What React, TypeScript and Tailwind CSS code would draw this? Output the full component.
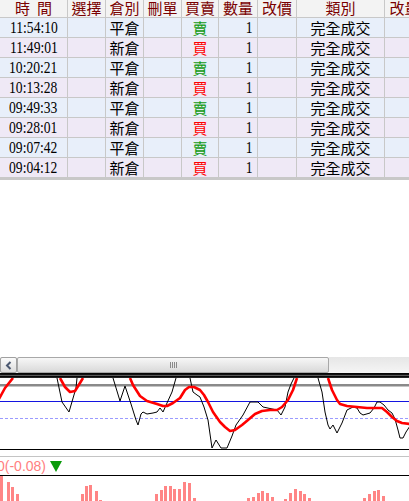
import React from "react";

const cols = "grid grid-cols-[68px_38px_38px_38px_37px_39px_39px_88px_40px]";
const cjk = "font-['Noto_Sans_CJK_TC','Noto_Sans_CJK_JP',sans-serif]";
const serif = "font-['Liberation_Serif','Noto_Sans_CJK_TC',serif]";

const heads = ["時間", "選擇", "倉別", "刪單", "買賣", "數量", "改價", "類別", "改量"];

const rows = [
  ["11:54:10", "平倉", "賣"],
  ["11:49:01", "新倉", "買"],
  ["10:20:21", "平倉", "賣"],
  ["10:13:28", "新倉", "買"],
  ["09:49:33", "平倉", "賣"],
  ["09:28:01", "新倉", "買"],
  ["09:07:42", "平倉", "賣"],
  ["09:04:12", "新倉", "買"],
];

// chart lines, y is relative to top of plot (page y 378)
const black = [
  [[57, 0], [62, 24], [69, 34], [76, 10], [77, 0]],
  [[113, 0], [120, 23], [125, 8], [131, 26], [136, 42], [138, 47], [141, 36], [143, 34], [147, 36], [153, 35], [157, 34], [160, 30], [163, 34], [167, 25], [172, 14], [176, 0]],
  [[190, 0], [193, 14], [197, 17], [200, 19], [204, 29], [208, 42], [212, 70], [216, 62], [221, 70], [227, 70], [232, 58], [236, 47], [243, 37], [250, 24], [258, 24], [263, 29], [277, 32], [281, 37], [285, 29], [288, 14], [291, 6], [294, 0]],
  [[318, 0], [322, 14], [325, 34], [328, 47], [330, 51], [333, 47], [337, 55], [342, 45], [347, 32], [353, 29], [357, 30], [360, 35], [363, 37], [370, 35], [374, 30], [377, 24], [380, 24], [384, 27], [388, 32], [392, 35], [395, 41], [398, 52], [400, 60], [403, 60], [406, 54], [410, 48]],
];

const red = [
  [[-1, 21], [5, 10], [13, 0]],
  [[60, 0], [65, 9], [70, 14], [75, 13], [80, 5], [83, 0]],
  [[130, 0], [133, 7], [140, 18], [147, 23], [157, 26], [163, 28], [167, 28], [173, 25], [180, 20], [185, 12], [189, 9], [194, 9], [200, 12], [204, 17], [208, 24], [213, 34], [220, 44], [225, 49], [230, 53], [235, 52], [242, 47], [248, 42], [255, 36], [262, 33], [270, 32], [277, 32], [282, 29], [288, 22], [293, 12], [297, 0]],
  [[328, 0], [332, 12], [337, 22], [340, 26], [347, 28], [357, 29], [367, 30], [382, 30], [387, 34], [392, 39], [397, 43], [402, 45], [410, 46]],
];

const bars: [number, number][] = [
  [0, 476], [7, 482], [11, 487], [16, 494],
  [81, 494], [85, 486], [89, 485], [95, 491], [99, 500],
  [155, 494], [160, 490], [164, 486], [169, 486], [173, 489], [178, 489], [183, 482], [188, 483], [193, 498],
  [247, 498], [252, 497], [257, 493], [261, 491], [266, 493], [271, 497],
  [284, 499], [289, 493], [294, 489], [299, 491], [303, 494], [308, 498],
  [363, 498], [368, 494], [373, 491], [377, 490], [382, 496],
];

const pts = (p: number[][]) => p.map(([x, y]) => `${x},${y}`).join(" ");

function Chart() {
  return (
    <svg width="409" height="72" className="block">
      <rect x="0" y="6" width="409" height="2.5" fill="#8a8a8a" />
      <line x1="0" y1="23.5" x2="409" y2="23.5" stroke="#1414e0" strokeWidth="1" />
      <line x1="0" y1="40.5" x2="409" y2="40.5" stroke="#9a9aff" strokeWidth="1" strokeDasharray="3 2" />
      <line x1="0" y1="71.5" x2="409" y2="71.5" stroke="#000" strokeWidth="1" />
      {black.map((p, i) => (
        <polyline key={i} points={pts(p)} fill="none" stroke="#000" strokeWidth="1" />
      ))}
      {red.map((p, i) => (
        <polyline key={i} points={pts(p)} fill="none" stroke="#ff0000" strokeWidth="2.6" strokeLinejoin="round" />
      ))}
    </svg>
  );
}

export default function App() {
  return (
    <div className="w-[409px] h-[501px] overflow-hidden bg-white flex flex-col">
      <div className="overflow-hidden">
        <div className={`${cols} w-[426px] h-[18px] bg-[#f3f3f3] border-b border-[#c8c8c8]`}>
          {heads.map((h, i) => (
            <div key={h} className={`border-r border-[#c8c8c8] flex justify-center items-start ${cjk} text-[15px] leading-[16px] text-[#7a0000] ${i === 0 ? "tracking-[7px] pl-[7px]" : ""}`}>
              {h}
            </div>
          ))}
        </div>
        {rows.map(([t, k, s], i) => (
          <div key={t} className={`${cols} w-[426px] h-[20px] border-b border-[#c8c8c8] ${i % 2 === 0 ? "bg-[#e8effa]" : "bg-[#efe9f6]"}`}>
            <div className="border-r border-[#c8c8c8] flex items-center justify-center">
              <span className={`${serif} inline-block scale-x-[0.8] text-[17px] leading-none`}>{t}</span>
            </div>
            <div className="border-r border-[#c8c8c8]" />
            <div className={`border-r border-[#c8c8c8] flex items-center justify-center ${cjk} text-[15px] leading-none`}>{k}</div>
            <div className="border-r border-[#c8c8c8]" />
            <div className={`border-r border-[#c8c8c8] flex items-center justify-center ${cjk} text-[15px] leading-none ${s === "買" ? "text-[#ff0000]" : "text-[#109a10]"}`}>{s}</div>
            <div className="border-r border-[#c8c8c8] flex items-center justify-end pr-[4px]">
              <span className={`${serif} inline-block scale-x-[0.8] text-[17px] leading-none`}>1</span>
            </div>
            <div className="border-r border-[#c8c8c8]" />
            <div className={`border-r border-[#c8c8c8] flex items-center justify-center ${cjk} text-[15px] leading-none`}>完全成交</div>
            <div className="border-r border-[#c8c8c8]" />
          </div>
        ))}
        <div className="h-[2px] bg-[#c8c8c8]" />
      </div>

      <div className="flex-1" />

      <div className="h-[16px] flex bg-[#f0f0f0]">
        <div className="w-[17px] border border-[#a0a0a0] rounded-[2px] bg-[linear-gradient(#fbfbfb,#dcdcdc)] flex items-center justify-center">
          <svg width="7" height="9" viewBox="0 0 7 9">
            <polyline points="5.5,1 2,4.5 5.5,8" fill="none" stroke="#4b5870" strokeWidth="2" />
          </svg>
        </div>
        <div className="w-[312px] border border-[#a8a8a8] rounded-[2px] bg-[linear-gradient(#f7f7f7,#d9d9d9)] flex items-center justify-center gap-[1px]">
          <div className="w-px h-[6px] bg-[#8a8a8a]" />
          <div className="w-px h-[6px] bg-[#8a8a8a]" />
          <div className="w-px h-[6px] bg-[#8a8a8a]" />
          <div className="w-px h-[6px] bg-[#8a8a8a]" />
        </div>
        <div className="flex-1 bg-[linear-gradient(#e6e6e6,#f5f5f5)]" />
      </div>
      <div className="h-[5px] bg-[linear-gradient(#000_0%,#111_30%,#777_45%,#000_65%,#333_100%)]" />
      <Chart />
      <div className="h-[6px]" />
      <div className="h-px bg-[#c4c4c4]" />
      <div className="h-[18px] flex items-center -ml-[3px]">
        <span className="font-['Liberation_Sans',sans-serif] text-[14px] leading-none text-[#ff8080]">0(-0.08)</span>
        <svg width="12" height="11" viewBox="0 0 12 11" className="ml-[4px]">
          <polygon points="0,0 12,0 6,11" fill="#0a9a0a" />
        </svg>
      </div>
      <div className="h-px bg-black" />
      <svg width="409" height="25" className="block">
        {bars.map(([x, y], i) => (
          <rect key={i} x={x} y={y - 476} width="3" height={501 - y} fill="#ff8585" />
        ))}
      </svg>
    </div>
  );
}
